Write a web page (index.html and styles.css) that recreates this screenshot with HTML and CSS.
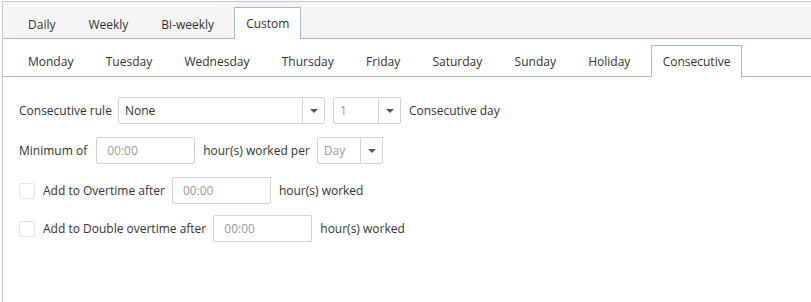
FILE: index.html
```html
<!DOCTYPE html>
<html>
<head>
<meta charset="utf-8">
<link rel="stylesheet" href="styles.css">
</head>
<body>
<div class="panel">
  <div class="tabs tabs-top">
    <div class="tab">Daily</div>
    <div class="tab">Weekly</div>
    <div class="tab">Bi-weekly</div>
    <div class="tab active">Custom</div>
  </div>
  <div class="tabs tabs-days">
    <div class="tab">Monday</div>
    <div class="tab">Tuesday</div>
    <div class="tab">Wednesday</div>
    <div class="tab">Thursday</div>
    <div class="tab">Friday</div>
    <div class="tab">Saturday</div>
    <div class="tab">Sunday</div>
    <div class="tab">Holiday</div>
    <div class="tab active">Consecutive</div>
  </div>
  <div class="form">
    <div class="row">
      <span class="label">Consecutive rule</span>
      <div class="select select-rule"><span class="value">None</span><span class="arrow"></span></div>
      <div class="select select-num"><span class="value muted">1</span><span class="arrow"></span></div>
      <span class="label">Consecutive day</span>
    </div>
    <div class="row">
      <span class="label label-min">Minimum of</span>
      <div class="input">00:00</div>
      <span class="label">hour(s) worked per</span>
      <div class="select select-day"><span class="value muted">Day</span><span class="arrow"></span></div>
    </div>
    <div class="row">
      <span class="check"></span>
      <span class="label">Add to Overtime after</span>
      <div class="input">00:00</div>
      <span class="label">hour(s) worked</span>
    </div>
    <div class="row row-last">
      <span class="check"></span>
      <span class="label">Add to Double overtime after</span>
      <div class="input">00:00</div>
      <span class="label">hour(s) worked</span>
    </div>
  </div>
</div>
</body>
</html>
```

FILE: styles.css
```css
html, body {
  margin: 0;
  padding: 0;
  background: #fff;
}
body {
  font-family: "Open Sans", "Noto Sans", sans-serif;
  font-size: 12px;
  color: #333;
}
.panel {
  margin: 1px 0 0 2px;
  height: 301px;
  box-sizing: border-box;
  border-top: 1px solid #c8c8c8;
  border-left: 1px solid #c8c8c8;
}
.tabs {
  display: flex;
  align-items: flex-end;
  border-bottom: 1px solid #a7bad3;
  box-sizing: border-box;
}
.tabs-top {
  background: #f5f5f5;
  height: 37px;
  padding-left: 12px;
  gap: 7px;
}
.tabs-days {
  height: 38px;
  padding-left: 13px;
  gap: 8.3px;
}
.tab {
  padding: 0 12px;
  height: 30px;
  line-height: 31px;
  border: 1px solid transparent;
  border-bottom: none;
  margin-bottom: -1px;
  white-space: nowrap;
}
.tabs-top .tab.active {
  padding: 0 11px;
}
.tabs-days .tab {
  height: 31px;
  line-height: 31px;
  padding: 0 11px;
}
.tab.active {
  background: #fff;
  border-color: #a7bad3;
  height: 31px;
}
.form {
  padding: 20px 0 0 16px;
  display: flex;
  flex-direction: column;
  gap: 13px;
}
.row {
  display: flex;
  align-items: center;
  height: 27px;
}
.row-last {
  margin-top: -2px;
}
.label {
  margin-right: 7px;
  white-space: nowrap;
}
.label-min {
  margin-right: 9px;
}
.select {
  display: flex;
  height: 27px;
  box-sizing: border-box;
  border: 1px solid #d3d3d3;
  border-radius: 2px;
  margin-right: 8px;
  background: #fff;
}
.row .label:first-child + .select {
  margin-left: -1px;
}
.select .value {
  flex: 1;
  padding-left: 6px;
  line-height: 25px;
}
.select .muted, .input {
  color: #9a9a9a;
}
.select .arrow {
  width: 21px;
  border-left: 1px solid #d3d3d3;
  position: relative;
}
.select .arrow::after {
  content: "";
  position: absolute;
  left: 7px;
  top: 11px;
  border-left: 4px solid transparent;
  border-right: 4px solid transparent;
  border-top: 4px solid #555;
}
.select-rule { width: 207px; }
.select-num { width: 68px; }
.select-day { width: 66px; }
.input {
  width: 99px;
  height: 27px;
  box-sizing: border-box;
  border: 1px solid #d3d3d3;
  border-radius: 2px;
  padding-left: 10px;
  line-height: 25px;
  margin-right: 8px;
}
.check {
  width: 16px;
  height: 16px;
  box-sizing: border-box;
  border: 1px solid #e3e3e3;
  border-radius: 2px;
  margin-right: 8px;
}
```
